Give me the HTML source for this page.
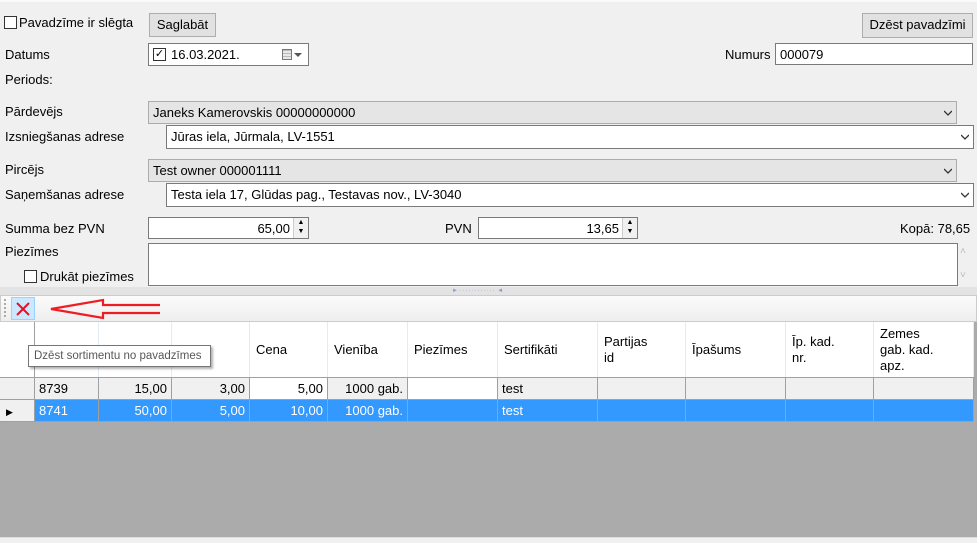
<!DOCTYPE html>
<html><head><meta charset="utf-8"><style>
*{box-sizing:border-box;margin:0;padding:0}
body{width:977px;height:543px;background:#f0f0f0;font-family:"Liberation Sans",sans-serif;font-size:13px;color:#000;position:relative;overflow:hidden}
.a{position:absolute;white-space:nowrap}
.lbl{position:absolute;line-height:15px}
.cb{position:absolute;width:13px;height:13px;border:1px solid #333;background:#fff}
.btn{position:absolute;border:1px solid #adadad;background:#e1e1e1;text-align:center;line-height:22px}
.inp{position:absolute;border:1px solid #7a7a7a;background:#fff;line-height:21px;padding-left:4px}
.combo{position:absolute;border:1px solid #acacac;background:#e5e5e5;line-height:22px;padding-left:4px}
.wcombo{position:absolute;border:1px solid #7a7a7a;background:#fff;line-height:22px;padding-left:4px}
.arr{position:absolute;right:4px;top:8px;width:8px;height:6px}
.spin{position:absolute;right:0;top:0;width:15px;height:100%;border-left:1px solid #ccc;background:#f0f0f0}
.cell{position:absolute;border-right:1px solid #a0a0a0;border-bottom:1px solid #a0a0a0;line-height:22px;padding:0 4px;overflow:hidden}
.hd{position:absolute;top:322px;height:56px;border-right:1px solid #e3ebf6;background:#fff;padding:0 6px;line-height:16px;display:flex;align-items:center}
</style></head><body>
<div class="a" style="left:0;top:0;width:977px;height:2px;background:#fafafa"></div>
<div class="cb" style="left:4px;top:16px"></div>
<div class="lbl" style="left:19px;top:15px">Pavadzīme ir slēgta</div>
<div class="btn" style="left:149px;top:13px;width:67px;height:24px">Saglabāt</div>
<div class="btn" style="left:862px;top:13px;width:111px;height:25px">Dzēst pavadzīmi</div>

<div class="lbl" style="left:5px;top:47px">Datums</div>
<div class="inp" style="left:148px;top:43px;width:161px;height:23px;padding-left:22px">16.03.2021.
 <div class="a" style="left:4px;top:4px;width:13px;height:13px;border:1px solid #333;background:#fff;font-size:11px;line-height:11px;text-align:center">✓</div>
 <div class="a" style="left:133px;top:5px;width:10px;height:11px;border:1px solid #777;background:repeating-linear-gradient(#bbb 0 1px,#e8e8e8 1px 3px)"></div>
 <svg class="a" style="left:145px;top:9px" width="8" height="5"><path d="M0 0h8L4 4z" fill="#555"/></svg>
</div>
<div class="lbl" style="left:725px;top:47px">Numurs</div>
<div class="inp" style="left:775px;top:43px;width:198px;height:22px">000079</div>
<div class="lbl" style="left:5px;top:72px">Periods:</div>

<div class="lbl" style="left:5px;top:104px">Pārdevējs</div>
<div class="combo" style="left:148px;top:101px;width:809px;height:23px">Janeks Kamerovskis 00000000000<svg class="arr" viewBox="0 0 8 6"><path d="M0 1l4 4 4-4" stroke="#333" fill="none" stroke-width="1.3"/></svg></div>
<div class="lbl" style="left:5px;top:129px">Izsniegšanas adrese</div>
<div class="wcombo" style="left:166px;top:125px;width:808px;height:24px">Jūras iela, Jūrmala, LV-1551<svg class="arr" viewBox="0 0 8 6"><path d="M0 1l4 4 4-4" stroke="#333" fill="none" stroke-width="1.3"/></svg></div>
<div class="lbl" style="left:5px;top:162px">Pircējs</div>
<div class="combo" style="left:148px;top:159px;width:809px;height:23px">Test owner 000001111<svg class="arr" viewBox="0 0 8 6"><path d="M0 1l4 4 4-4" stroke="#333" fill="none" stroke-width="1.3"/></svg></div>
<div class="lbl" style="left:5px;top:187px">Saņemšanas adrese</div>
<div class="wcombo" style="left:166px;top:183px;width:808px;height:24px">Testa iela 17, Glūdas pag., Testavas nov., LV-3040<svg class="arr" viewBox="0 0 8 6"><path d="M0 1l4 4 4-4" stroke="#333" fill="none" stroke-width="1.3"/></svg></div>

<div class="lbl" style="left:5px;top:221px">Summa bez PVN</div>
<div class="inp" style="left:148px;top:217px;width:161px;height:22px;text-align:right;padding-right:18px">65,00<div class="spin"><div style="font-size:7px;line-height:9px;text-align:center">▲<br>▼</div></div></div>
<div class="lbl" style="left:445px;top:221px">PVN</div>
<div class="inp" style="left:478px;top:217px;width:160px;height:22px;text-align:right;padding-right:18px">13,65<div class="spin"><div style="font-size:7px;line-height:9px;text-align:center">▲<br>▼</div></div></div>
<div class="lbl" style="left:900px;top:221px">Kopā: 78,65</div>

<div class="lbl" style="left:5px;top:244px">Piezīmes</div>
<div class="a" style="left:148px;top:243px;width:810px;height:43px;border:1px solid #7a7a7a;background:#fff"></div>
<div class="a" style="left:960px;top:246px;color:#bbb;font-size:10px">˄</div>
<div class="a" style="left:960px;top:270px;color:#bbb;font-size:10px">˅</div>
<div class="cb" style="left:24px;top:270px"></div>
<div class="lbl" style="left:40px;top:269px">Drukāt piezīmes</div>

<div class="a" style="left:0;top:287px;width:977px;height:8px;background:#e3e3e3"></div>
<div class="a" style="left:452px;top:288px;font-size:6px;color:#8ea0c8">►&nbsp;<span style="letter-spacing:1px">············</span>&nbsp;◄</div>

<div class="a" style="left:0;top:295px;width:977px;height:27px;background:linear-gradient(#fbfbfb,#eeeeee);border:1px solid #ccc"></div>
<div class="a" style="left:4px;top:299px;width:2px;height:18px;border-left:2px dotted #aaa"></div>
<div class="a" style="left:11px;top:297px;width:24px;height:23px;background:#cce8ff;border:1px solid #99d1ff"></div>
<svg class="a" style="left:15px;top:301px" width="16" height="16"><path d="M2 2L14 14M14 2L2 14" stroke="#e81123" stroke-width="2"/></svg>
<svg class="a" style="left:48px;top:298px" width="112" height="22"><path d="M3 11L55 2v5h102v8H55v5z" fill="none" stroke="#ee1c24" stroke-width="2.2" stroke-linejoin="miter"/></svg>

<div class="a" style="left:0;top:322px;width:977px;height:215px;background:#ababab"></div>
<div class="hd" style="left:0;width:35px;border-right:1px solid #a0a0a0"></div>
<div class="hd" style="left:35px;width:64px"></div>
<div class="hd" style="left:99px;width:73px"></div>
<div class="hd" style="left:172px;width:78px">ns</div>
<div class="hd" style="left:250px;width:78px">Cena</div>
<div class="hd" style="left:328px;width:80px">Vienība</div>
<div class="hd" style="left:408px;width:90px">Piezīmes</div>
<div class="hd" style="left:498px;width:100px">Sertifikāti</div>
<div class="hd" style="left:598px;width:88px">Partijas<br>id</div>
<div class="hd" style="left:686px;width:100px">Īpašums</div>
<div class="hd" style="left:786px;width:88px">Īp. kad.<br>nr.</div>
<div class="hd" style="left:874px;width:100px">Zemes<br>gab. kad.<br>apz.</div>
<div class="a" style="left:0;top:377px;width:975px;height:1px;background:#a0a0a0"></div>

<div class="cell" style="left:0;top:378px;width:35px;height:22px;background:#f0f0f0"></div>
<div class="cell" style="left:35px;top:378px;width:64px;height:22px;background:#f0f0f0">8739</div>
<div class="cell" style="left:99px;top:378px;width:73px;height:22px;background:#f0f0f0;text-align:right">15,00</div>
<div class="cell" style="left:172px;top:378px;width:78px;height:22px;background:#f0f0f0;text-align:right">3,00</div>
<div class="cell" style="left:250px;top:378px;width:78px;height:22px;background:#fff;text-align:right">5,00</div>
<div class="cell" style="left:328px;top:378px;width:80px;height:22px;background:#f0f0f0;text-align:right">1000 gab.</div>
<div class="cell" style="left:408px;top:378px;width:90px;height:22px;background:#fff"></div>
<div class="cell" style="left:498px;top:378px;width:100px;height:22px;background:#f0f0f0">test</div>
<div class="cell" style="left:598px;top:378px;width:88px;height:22px;background:#f0f0f0"></div>
<div class="cell" style="left:686px;top:378px;width:100px;height:22px;background:#f0f0f0"></div>
<div class="cell" style="left:786px;top:378px;width:88px;height:22px;background:#f0f0f0"></div>
<div class="cell" style="left:874px;top:378px;width:100px;height:22px;background:#f0f0f0"></div>

<div class="cell" style="left:0;top:400px;width:35px;height:22px;background:#f0f0f0;padding-left:6px"><span style="font-size:9px">▶</span></div>
<div style="color:#fff">
<div class="cell" style="left:35px;top:400px;width:64px;height:22px;background:#3399ff">8741</div>
<div class="cell" style="left:99px;top:400px;width:73px;height:22px;background:#3399ff;text-align:right">50,00</div>
<div class="cell" style="left:172px;top:400px;width:78px;height:22px;background:#3399ff;text-align:right">5,00</div>
<div class="cell" style="left:250px;top:400px;width:78px;height:22px;background:#3399ff;text-align:right">10,00</div>
<div class="cell" style="left:328px;top:400px;width:80px;height:22px;background:#3399ff;text-align:right">1000 gab.</div>
<div class="cell" style="left:408px;top:400px;width:90px;height:22px;background:#3399ff"></div>
<div class="cell" style="left:498px;top:400px;width:100px;height:22px;background:#3399ff">test</div>
<div class="cell" style="left:598px;top:400px;width:88px;height:22px;background:#3399ff"></div>
<div class="cell" style="left:686px;top:400px;width:100px;height:22px;background:#3399ff"></div>
<div class="cell" style="left:786px;top:400px;width:88px;height:22px;background:#3399ff"></div>
<div class="cell" style="left:874px;top:400px;width:100px;height:22px;background:#3399ff"></div>
</div>

<div class="a" style="left:28px;top:345px;width:183px;height:22px;background:#fff;border:1px solid #767676;box-shadow:2px 2px 2px rgba(0,0,0,.3);font-size:11.5px;line-height:20px;padding-left:5px;color:#575757;overflow:hidden">Dzēst sortimentu no pavadzīmes</div>

<div class="a" style="left:0;top:537px;width:977px;height:6px;background:#f0f0f0;border-top:1px solid #ddd"></div>
</body></html>
